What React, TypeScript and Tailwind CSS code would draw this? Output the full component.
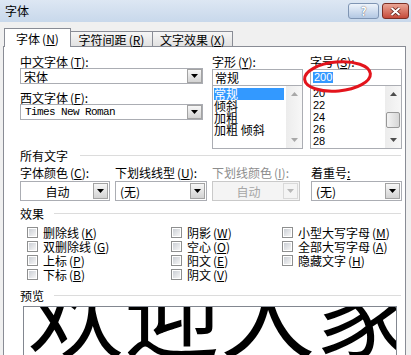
import React from "react";

// mnemonic: "(X)" with the key letter underlined, like the Win32 dialog labels
function Mn({ k }: { k: string }) {
  return (
    <span className="ml-[2px]">
      (<u>{k}</u>)
    </span>
  );
}

function DropBtn({ disabled }: { disabled?: boolean }) {
  return (
    <span
      className={
        "flex h-full w-[15px] shrink-0 items-center justify-center border " +
        (disabled
          ? "border-[#d9d9d9] bg-[#f4f4f4]"
          : "border-[#a3a3a3] bg-gradient-to-b from-[#f7f7f7] to-[#d3d3d3]")
      }
    >
      <svg width="7" height="4" viewBox="0 0 7 4">
        <path d="M0 0h7L3.5 4z" fill={disabled ? "#b8b8b8" : "#000"} />
      </svg>
    </span>
  );
}

function Arrow({ up, dim }: { up?: boolean; dim?: boolean }) {
  return (
    <div className="flex h-[16px] items-center justify-center">
      <svg width="7" height="4" viewBox="0 0 7 4">
        <path d={up ? "M3.5 0L7 4H0z" : "M0 0h7L3.5 4z"} fill={dim ? "#a8a8a8" : "#4d4d4d"} />
      </svg>
    </div>
  );
}

function ScrollBar({ thumb }: { thumb?: boolean }) {
  return (
    <div className="flex w-[16px] shrink-0 flex-col bg-gradient-to-r from-[#ececec] to-[#f7f7f7]">
      <Arrow up dim={!thumb} />
      <div className="flex-1 px-px">
        {thumb && (
          <div className="mt-[10px] h-[16px] rounded-[2px] border border-[#979797] bg-gradient-to-r from-[#f3f3f3] to-[#d6d6d6]" />
        )}
      </div>
      <Arrow dim={!thumb} />
    </div>
  );
}

function Separator({ label, gap }: { label: string; gap: string }) {
  return (
    <div className="flex h-[13px] items-center pr-[4px]">
      <span className="shrink-0">{label}</span>
      <div className={"h-px flex-1 bg-[#dcdcdc] " + gap} />
    </div>
  );
}

function Check({ label, k }: { label: string; k: string }) {
  return (
    <div className="flex h-[14px] items-center gap-[5px]">
      <span className="flex h-[11px] w-[11px] shrink-0 items-center justify-center border border-[#8e8f8f] bg-white">
        <span className="h-[7px] w-[7px] bg-gradient-to-br from-[#cbcfd5] to-[#f6f6f6]" />
      </span>
      <span className="whitespace-nowrap">
        {label}
        <Mn k={k} />
      </span>
    </div>
  );
}

export default function App() {
  return (
    <div className="relative h-[355px] w-[411px] overflow-hidden bg-[#f0f0f0] font-['Noto_Sans_CJK_SC',sans-serif] text-[12px] leading-[13px] text-black">
      {/* title bar */}
      <div className="flex h-[22px] items-start justify-between bg-gradient-to-b from-[#dde7f3] to-[#c8d8eb]">
        <span className="pl-[5px] pt-[4px]">字体</span>
        <div className="flex gap-[3px] pr-[2px] pt-[3px]">
          <div className="flex h-[16px] w-[31px] items-center justify-center rounded-[3px] border border-[#7f95b3] bg-gradient-to-b from-[#eef4fb] to-[#b3c8e3] text-[12px] font-bold leading-none text-white [text-shadow:0_0_1px_#223]">
            ?
          </div>
          <div className="flex h-[16px] w-[27px] items-center justify-center rounded-[3px] border border-[#7b2f25] bg-gradient-to-b from-[#eaa596] to-[#c4493a]">
            <svg width="11" height="9" viewBox="0 0 11 9">
              <path d="M1.5 1l8 7M9.5 1l-8 7" stroke="#5b1a12" strokeWidth="3.4" />
              <path d="M1.5 1l8 7M9.5 1l-8 7" stroke="#fff" strokeWidth="2" />
            </svg>
          </div>
        </div>
      </div>

      {/* tabs */}
      <div className="flex h-[24px] items-end pl-[4px]">
        <div className="relative z-10 -mb-px flex h-[19px] w-[67px] items-center justify-center border border-b-0 border-[#898c95] bg-white">
          字体<Mn k="N" />
        </div>
        <div className="-ml-px flex h-[15px] w-[83px] items-center justify-center border border-b-0 border-[#898c95] bg-gradient-to-b from-[#f6f6f6] to-[#e1e1e1]">
          字符间距<Mn k="R" />
        </div>
        <div className="-ml-px flex h-[15px] w-[81px] items-center justify-center border border-b-0 border-[#898c95] bg-gradient-to-b from-[#f6f6f6] to-[#e1e1e1]">
          文字效果<Mn k="X" />
        </div>
      </div>

      {/* panel */}
      <div className="ml-[3px] h-[320px] w-[403px] border border-[#898c95] bg-white pl-[16px] pt-[8px]">
        <div className="flex">
          <div className="w-[183px]">
            <div>
              中文字体<Mn k="T" />:
            </div>
            <div className="flex h-[16px] items-center justify-between border border-[#abadb3] bg-white pl-[3px]">
              <span>宋体</span>
              <DropBtn />
            </div>
            <div className="mt-[7px]">
              西文字体<Mn k="F" />:
            </div>
            <div className="flex h-[16px] items-center justify-between border border-[#abadb3] bg-white pl-[4px]">
              <span className="font-['Liberation_Mono',monospace] text-[11px] tracking-[-0.6px]">Times New Roman</span>
              <DropBtn />
            </div>
          </div>

          <div className="ml-[9px] w-[91px]">
            <div>
              字形<Mn k="Y" />:
            </div>
            <div className="mt-px flex h-[17px] items-center border border-[#abadb3] bg-white pl-[2px]">常规</div>
            <div className="flex h-[63px] border border-t-0 border-[#abadb3] bg-white">
              <div className="flex-1 pl-px pt-[2px] leading-[12px]">
                <div className="w-[70px] bg-[#3399ff] text-white">常规</div>
                <div>倾斜</div>
                <div>加粗</div>
                <div>加粗 倾斜</div>
              </div>
              <ScrollBar />
            </div>
          </div>

          <div className="ml-[7px] w-[92px]">
            <div>
              字号<Mn k="S" />:
            </div>
            <div className="mt-px flex h-[17px] items-center border border-[#abadb3] bg-white pl-[2px]">
              <span className="bg-[#3399ff] px-px font-['Liberation_Sans',sans-serif] text-[11px] leading-[11px] text-white">200</span>
            </div>
            <div className="flex h-[63px] border border-t-0 border-[#abadb3] bg-white">
              <div className="flex-1 pl-[2px] pt-px font-['Liberation_Sans',sans-serif] text-[11px] leading-[12px]">
                <div>20</div>
                <div>22</div>
                <div>24</div>
                <div>26</div>
                <div>28</div>
              </div>
              <ScrollBar thumb />
            </div>
          </div>
        </div>

        <Separator label="所有文字" gap="ml-[12px]" />

        <div className="mt-[4px] flex">
          <div className="w-[90px]">
            <div className="whitespace-nowrap">
              字体颜色<Mn k="C" />:
            </div>
            <div className="mt-[2px] flex h-[20px] items-center border border-[#abadb3] bg-white p-px">
              <span className="flex-1 text-center">自动</span>
              <DropBtn />
            </div>
          </div>
          <div className="ml-[5px] w-[92px]">
            <div className="whitespace-nowrap">
              下划线线型<Mn k="U" />:
            </div>
            <div className="mt-[2px] flex h-[20px] items-center border border-[#abadb3] bg-white p-px">
              <span className="flex-1 pl-[3px]">(无)</span>
              <DropBtn />
            </div>
          </div>
          <div className="ml-[5px] w-[88px] text-[#8d8d8d]">
            <div className="whitespace-nowrap">
              下划线颜色<Mn k="I" />:
            </div>
            <div className="mt-[2px] flex h-[20px] items-center border border-[#c9c9c9] bg-[#f4f4f4] p-px text-[#a6a6a6]">
              <span className="flex-1 text-center">自动</span>
              <DropBtn disabled />
            </div>
          </div>
          <div className="ml-[11px] w-[91px]">
            <div>
              着重号<u>:</u>
            </div>
            <div className="mt-[2px] flex h-[20px] items-center border border-[#abadb3] bg-white p-px">
              <span className="flex-1 pl-[3px]">(无)</span>
              <DropBtn />
            </div>
          </div>
        </div>

        <div className="mt-[6px]">
          <Separator label="效果" gap="ml-[10px]" />
        </div>

        <div className="ml-[7px] mt-[5px] flex">
          <div className="w-[144px]">
            <Check label="删除线" k="K" />
            <Check label="双删除线" k="G" />
            <Check label="上标" k="P" />
            <Check label="下标" k="B" />
          </div>
          <div className="w-[111px]">
            <Check label="阴影" k="W" />
            <Check label="空心" k="O" />
            <Check label="阳文" k="E" />
            <Check label="阴文" k="V" />
          </div>
          <div>
            <Check label="小型大写字母" k="M" />
            <Check label="全部大写字母" k="A" />
            <Check label="隐藏文字" k="H" />
          </div>
        </div>

        <div className="mt-[8px]">
          <Separator label="预览" gap="ml-[10px]" />
        </div>

        <div className="ml-[3px] mt-[4px] h-[60px] w-[374px] overflow-hidden border border-[#828790] bg-white pl-[4px]">
          <div className="-mt-[46px] whitespace-nowrap text-[96px] leading-none">欢迎大家</div>
        </div>
      </div>

      {/* red marker ellipse drawn over the size field */}
      <svg className="absolute left-[300px] top-[58px]" width="76" height="38" viewBox="0 0 76 38">
        <ellipse cx="37.5" cy="18.5" rx="33" ry="14.5" transform="rotate(-5 37.5 18.5)" fill="none" stroke="#e3141c" strokeWidth="3" />
      </svg>
    </div>
  );
}
